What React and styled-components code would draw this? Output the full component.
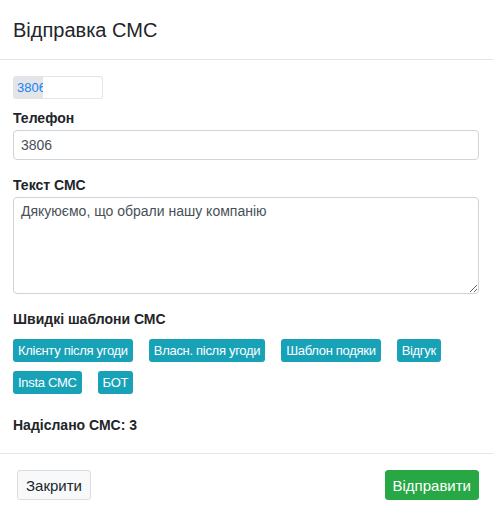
import React from "react";
import styled, { createGlobalStyle } from "styled-components";

const templates = [
  "Клієнту після угоди",
  "Власн. після угоди",
  "Шаблон подяки",
  "Відгук",
  "Insta СМС",
  "БОТ",
];

export default function App() {
  return (
    <>
      <GlobalStyle />
      <Modal>
        <Header>
          <Title>Відправка СМС</Title>
        </Header>

        <Body>
          <PrefixBox>
            <PrefixText>3806</PrefixText>
            <PrefixFill />
          </PrefixBox>

          <Label>Телефон</Label>
          <Input defaultValue="3806" />

          <Label>Текст СМС</Label>
          <TextArea defaultValue="Дякуюємо, що обрали нашу компанію" />

          <Label $top={17} $bottom={11}>
            Швидкі шаблони СМС
          </Label>
          <Chips>
            {templates.map((t) => (
              <Chip key={t}>{t}</Chip>
            ))}
          </Chips>

          <Sent>Надіслано СМС: 3</Sent>
        </Body>

        <Footer>
          <CloseButton>Закрити</CloseButton>
          <SendButton>Відправити</SendButton>
        </Footer>
      </Modal>
    </>
  );
}

const GlobalStyle = createGlobalStyle`
  body {
    margin: 0;
    background: #fff;
    font-family: "Liberation Sans", Arial, sans-serif;
    color: #212529;
  }
`;

const Modal = styled.div`
  width: 493px;
  height: 511px;
  display: flex;
  flex-direction: column;
  background: #fff;
`;

const Header = styled.div`
  height: 60px;
  box-sizing: border-box;
  padding: 18px 13px 0;
  border-bottom: 1px solid #e5e5e5;
`;

const Title = styled.h4`
  margin: 0;
  font-size: 20px;
  line-height: 24px;
  font-weight: 400;
  color: #212529;
`;

const Body = styled.div`
  padding: 16px 14px 0 13px;
  display: flex;
  flex-direction: column;
  height: 394px;
  box-sizing: border-box;
  border-bottom: 1px solid #e5e5e5;
`;

const PrefixBox = styled.div`
  width: 90px;
  height: 23px;
  box-sizing: border-box;
  display: flex;
  align-items: stretch;
  background: #e4e5e8;
  border-radius: 3px;
  padding: 1px 1px 1px 0;
`;

const PrefixText = styled.span`
  padding-left: 4px;
  width: 26px;
  overflow: hidden;
  font-size: 13px;
  line-height: 21px;
  color: #1a82f7;
  white-space: nowrap;
`;

const PrefixFill = styled.span`
  flex: 1;
  background: #fff;
  border-radius: 0 2px 2px 0;
`;

const Label = styled.div`
  margin-top: ${(p) => p.$top ?? 11}px;
  margin-bottom: ${(p) => p.$bottom ?? 3}px;
  font-size: 14px;
  line-height: 17px;
  font-weight: 700;
  color: #212529;
`;

const fieldBase = `
  width: 100%;
  box-sizing: border-box;
  border: 1px solid #ced4da;
  border-radius: 4px;
  font-family: "Liberation Sans", Arial, sans-serif;
  font-size: 14px;
  color: #495057;
  background: #fff;
  outline: none;
`;

const Input = styled.input`
  ${fieldBase}
  height: 30px;
  padding: 0 7px;
  margin-bottom: 6px;
`;

const TextArea = styled.textarea`
  ${fieldBase}
  display: block;
  height: 97px;
  padding: 5px 7px;
  line-height: 17px;
  resize: vertical;
`;

const Chips = styled.div`
  display: flex;
  flex-wrap: wrap;
  column-gap: 16px;
  row-gap: 9px;
`;

const Chip = styled.span`
  height: 23px;
  line-height: 23px;
  padding: 0 5px;
  background: #17a2b8;
  color: #fff;
  font-size: 13px;
  letter-spacing: -0.3px;
  border-radius: 3px;
  white-space: nowrap;
`;

const Sent = styled.div`
  margin-top: 23px;
  font-size: 14px;
  line-height: 17px;
  font-weight: 700;
`;

const Footer = styled.div`
  flex: 1;
  display: flex;
  align-items: flex-start;
  justify-content: space-between;
  padding: 16px 14px 0 17px;
`;

const Button = styled.button`
  height: 30px;
  padding: 0 8px;
  border-radius: 3px;
  font-family: "Liberation Sans", Arial, sans-serif;
  font-size: 15px;
  cursor: pointer;
`;

const CloseButton = styled(Button)`
  background: #f8f9fa;
  border: 1px solid #dcdcdc;
  color: #212529;
`;

const SendButton = styled(Button)`
  background: #28a745;
  border: 1px solid #28a745;
  color: #fff;
  padding: 0 7px;
`;
